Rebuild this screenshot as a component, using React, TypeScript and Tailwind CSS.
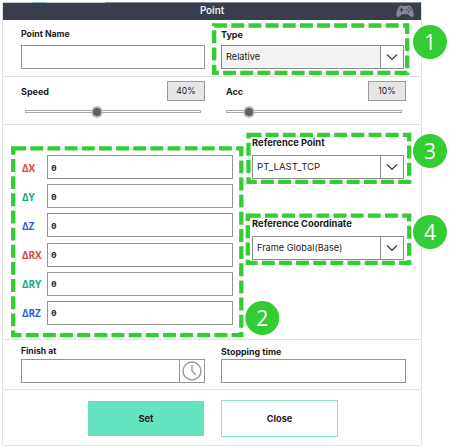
import React from "react";

const LABEL = "block whitespace-nowrap leading-[11px] font-bold text-[#1c1c1c]";
const FIELD = "border border-[#959595] bg-white";

function Select({ value, className }: { value: string; className: string }) {
  return (
    <div className={`flex h-[24px] border border-[#8c8c8c] ${className}`}>
      <span className="flex-1 self-center whitespace-nowrap pl-[4px] leading-[12px]">{value}</span>
      <span className="flex w-[23px] items-center justify-center border-l border-[#8c8c8c] bg-white">
        <svg width="12" height="8" viewBox="0 0 12 8" fill="none" stroke="#444" strokeWidth="1.3">
          <path d="M1 1.5 6 6.3 11 1.5" />
        </svg>
      </span>
    </div>
  );
}

function Slider({ lead, tail }: { lead: string; tail: string }) {
  return (
    <div className="mt-[4px] flex h-[13px] items-center">
      <span className={`h-[3px] shrink-0 rounded-l-[1px] border border-r-0 border-[#a8a8a8] bg-white ${lead}`} />
      <span className="size-[12px] shrink-0 rounded-full border-2 border-[#bcbcbc] bg-[#606060]" />
      <span className={`h-[3px] flex-1 rounded-r-[1px] border border-l-0 border-[#a8a8a8] bg-white ${tail}`} />
    </div>
  );
}

function SliderGroup({ label, value, lead, tail, className }: { label: string; value: string; lead: string; tail: string; className: string }) {
  return (
    <div className={className}>
      <div className="flex h-[20px] items-center justify-between">
        <span className={`text-[9px] ${LABEL}`}>{label}</span>
        <span className="flex h-[20px] w-[38px] items-center justify-center border border-[#999] bg-[#e6e6e6] text-[8.600px]">{value}</span>
      </div>
      <Slider lead={lead} tail={tail} />
    </div>
  );
}

const AXES = [
  ["ΔX", "text-[#df4449]"],
  ["ΔY", "text-[#16a982]"],
  ["ΔZ", "text-[#315fdc]"],
  ["ΔRX", "text-[#df4449]"],
  ["ΔRY", "text-[#16a982]"],
  ["ΔRZ", "text-[#315fdc]"],
];

const FRAMES = [
  { x: 214.2, y: 25.5, w: 193, h: 47.4 },
  { x: 13.2, y: 148.4, w: 228.1, h: 186.7 },
  { x: 248.5, y: 134.8, w: 160.7, h: 47 },
  { x: 247.8, y: 215.7, w: 161.4, h: 47.1 },
];

const BADGES = [
  { n: 1, x: 430, y: 42 },
  { n: 2, x: 262.3, y: 318 },
  { n: 3, x: 430, y: 151 },
  { n: 4, x: 430, y: 232 },
];

export default function App() {
  return (
    <div className="relative h-[448px] w-[453px] overflow-hidden bg-white pl-[2px] pt-[2px] font-['Inter',sans-serif] text-[#1c1c1c]">
      <div className="flex h-[444px] w-[420px] flex-col border border-t-0 border-[#e3e3e3] bg-white">
        <div className="flex h-px shrink-0 bg-[#8b8e96]">
          <span className="w-[29px] bg-[#c9cbd0]" />
          <span className="w-[14px] bg-[#7db4e2]" />
          <span className="w-[59px] bg-[#c9cbd0]" />
        </div>
        <header className="relative flex h-[17px] shrink-0 items-center justify-center bg-[#383e4c] text-[9.800px] font-semibold text-[#eee]">
          <span>Point</span>
          <svg className="absolute right-[7px] top-[2px]" width="18" height="13" viewBox="0 0 18 13">
            <path fill="#858994" d="M4.5.7C5.5.3 7 .5 7.5 1h3c.5-.5 2-.7 3-.3 2.6.7 4.2 6.300 4.100 9.200-.1 2.200-1.800 2.900-3.400 1.400L12 9.200H6l-2.200 2.100C2.200 12.800.5 12.100.4 9.900.3 7 1.900 1.400 4.500.7Z" />
            <path stroke="#383e4c" strokeWidth="1.200" d="M5.500 2.800v4M3.500 4.800h4" />
            <g fill="#383e4c">
              <circle cx="12.800" cy="3" r=".8" />
              <circle cx="12.800" cy="6.600" r=".8" />
              <circle cx="11" cy="4.800" r=".8" />
              <circle cx="14.600" cy="4.800" r=".8" />
            </g>
          </svg>
        </header>
        <section className="flex h-[57px] shrink-0 gap-[16px] border-b border-[#e1e1e1] pl-[18px] pt-[9px]">
          <div>
            <label className={`text-[8.700px] ${LABEL}`}>Point Name</label>
            <div className={`mt-[5px] h-[24px] w-[184px] ${FIELD}`} />
          </div>
          <div>
            <label className={`text-[9px] ${LABEL}`}>Type</label>
            <Select value="Relative" className="mt-[5px] w-[183px] bg-[#f3f3f3] text-[9.200px]" />
          </div>
        </section>
        <section className="flex h-[48px] shrink-0 gap-[21px] border-b border-[#e1e1e1] pl-[18px] pt-[4px]">
          <SliderGroup label="Speed" value="40%" lead="ml-[4px] w-[66px]" tail="mr-[4px]" className="w-[184px]" />
          <SliderGroup label="Acc" value="10%" lead="w-[17px]" tail="mr-[4px]" className="w-[180px]" />
        </section>
        <section className="flex h-[215px] shrink-0 border-b border-[#e1e1e1] pl-[19px]">
          <div className="flex w-[211px] flex-col gap-[5.200px] pt-[30px]">
            {AXES.map(([label, color]) => (
              <div key={label} className="flex h-[24px] shrink-0 items-center">
                <span className={`w-[25px] shrink-0 whitespace-nowrap pt-[2px] font-['Open_Sans',sans-serif] text-[10px] font-bold tracking-[-0.100px] ${color}`}>{label}</span>
                <span className={`flex h-[24px] w-[186px] items-center pl-[3px] pt-[3px] font-['Liberation_Mono',monospace] text-[9.500px] leading-[12px] font-bold ${FIELD}`}>0</span>
              </div>
            ))}
          </div>
          <div className="ml-[19px] w-[152px] pt-[12px]">
            <label className={`text-[9.400px] ${LABEL}`}>Reference Point</label>
            <Select value="PT_LAST_TCP" className="mt-[7px] w-[152px] bg-white text-[9.600px]" />
            <label className={`mt-[39px] text-[9.400px] ${LABEL}`}>Reference Coordinate</label>
            <Select value="Frame Global(Base)" className="mt-[7px] w-[152px] bg-white text-[9.200px]" />
          </div>
        </section>
        <section className="flex h-[50px] shrink-0 gap-[16px] border-b border-[#e1e1e1] pl-[18px] pt-[6px]">
          <div>
            <label className={`text-[8.600px] ${LABEL}`}>Finish at</label>
            <div className={`mt-[2px] flex h-[24px] w-[184px] justify-end ${FIELD}`}>
              <span className="flex w-[25px] items-center justify-center border-l border-[#959595]">
                <svg width="20" height="20" viewBox="0 0 20 20" fill="none" stroke="#999" strokeWidth="1.400">
                  <circle cx="10" cy="10" r="9" />
                  <path d="M10 4v6l4 4" />
                </svg>
              </span>
            </div>
          </div>
          <div>
            <label className={`text-[8.900px] ${LABEL}`}>Stopping time</label>
            <div className={`mt-[2px] h-[24px] w-[185px] ${FIELD}`} />
          </div>
        </section>
        <footer className="flex items-start gap-[18px] pl-[85px] pt-[10px] text-[9.200px] font-bold">
          <button className="mt-[1px] h-[35px] w-[116px] bg-[#65e2bf] pt-px">Set</button>
          <button className="-ml-px h-[37px] w-[117px] border border-[#87e6cb] bg-white">Close</button>
        </footer>
      </div>
      <svg className="pointer-events-none absolute left-0 top-0" width="453" height="448" viewBox="0 0 453 448">
        {FRAMES.map((f) => (
          <rect key={f.y} x={f.x} y={f.y} width={f.w} height={f.h} fill="none" stroke="#33cc33" strokeWidth="4.300" strokeDasharray="12.900 4.250" />
        ))}
        {BADGES.map((b) => (
          <g key={b.n}>
            <circle cx={b.x} cy={b.y} r="17" fill="#33cc33" />
            <text x={b.x} y={b.y + 7.5} textAnchor="middle" fill="#fff" fontSize="21" fontFamily="'Open Sans', 'Noto Sans', sans-serif">{b.n}</text>
          </g>
        ))}
      </svg>
    </div>
  );
}
